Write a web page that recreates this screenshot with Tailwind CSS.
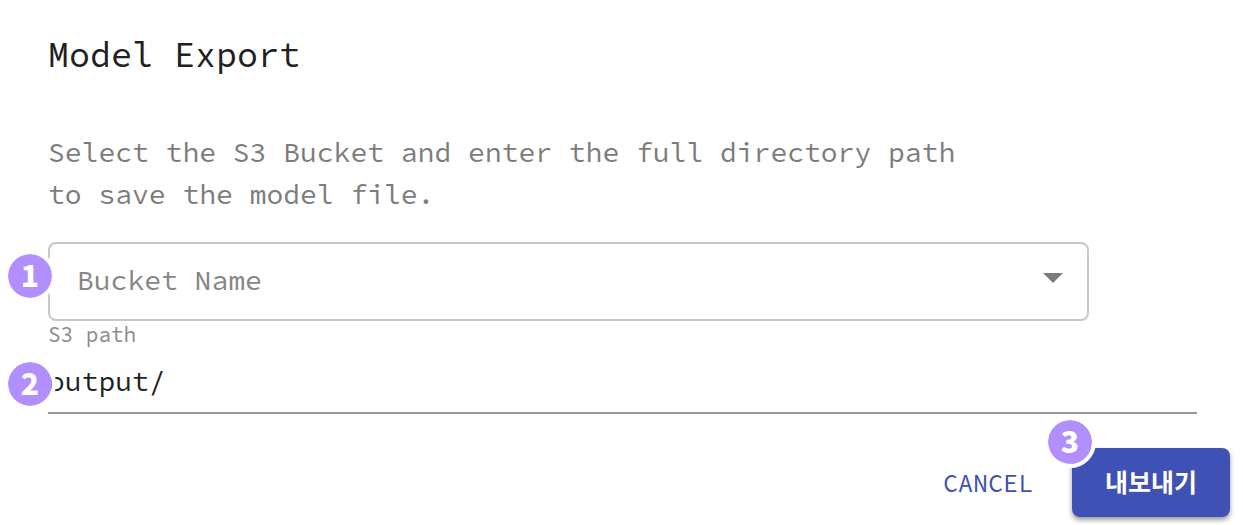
<!DOCTYPE html>
<html lang="ko">
<head>
<meta charset="utf-8">
<meta name="viewport" content="width=device-width, initial-scale=1">
<title>Model Export</title>
<script src="https://cdn.jsdelivr.net/npm/@tailwindcss/browser@4"></script>
</head>
<body class="min-h-screen bg-white font-['Source_Code_Pro','Noto_Sans_Mono','Liberation_Mono','Noto_Sans_CJK_KR',monospace]">
<main role="dialog" aria-labelledby="title" aria-describedby="description" class="w-full pt-[31px]">
  <div class="pl-12 pr-[46px]">
    <h1 id="title" class="text-[35px] leading-[48px] text-[#212121]">Model Export</h1>
    <p id="description" class="mt-[52px] text-[28px] leading-[42px] text-[#7c7c7c]">Select the S3 Bucket and enter the full directory path<br>to save the model file.</p>
    <div class="relative mt-[27px] mr-[108px]">
      <select aria-label="Bucket Name" class="block h-[79px] w-full appearance-none rounded-lg border-2 border-[#c8c8c8] bg-white pb-1 pl-[27px] pr-16 text-[28px] leading-[42px] text-[#868686]">
        <option>Bucket Name</option>
      </select>
      <svg class="pointer-events-none absolute right-[26px] top-[31px] h-[10px] w-5" viewBox="0 0 20 10" aria-hidden="true"><path d="M0 0h20L10 10z" fill="#7c7c7c"/></svg>
      <span class="absolute -left-11 top-[8px] flex size-[52px] items-center justify-center rounded-full border-4 border-white bg-[#b18fff] bg-clip-padding pb-1 font-['Noto_Sans_CJK_KR',sans-serif] text-[30px] leading-none font-black text-white">1</span>
    </div>
    <label for="path" class="block text-[21px] leading-[28px] text-[#8a8a8a]">S3 path</label>
    <div class="relative">
      <input id="path" type="text" value="output/" class="block h-[65px] w-full border-b-2 border-[#979797] bg-transparent text-[28px] leading-[42px] text-[#212121] outline-none">
      <span class="absolute -left-11 top-[9px] flex size-[52px] items-center justify-center rounded-full border-4 border-white bg-[#b18fff] bg-clip-padding pb-1 font-['Noto_Sans_CJK_KR',sans-serif] text-[30px] leading-none font-black text-white">2</span>
    </div>
  </div>
  <div class="mt-[34px] flex items-center justify-end gap-[39px] pr-[13px]">
    <button type="button" class="text-[25px] leading-[42px] text-[#3f51b5]">CANCEL</button>
    <div class="relative">
      <button type="button" class="block h-[69px] w-[158px] rounded-lg bg-[#3f51b5] pb-0.5 font-['Noto_Sans_CJK_KR',sans-serif] text-[25px] leading-none font-bold text-white shadow-[0_3px_5px_rgba(0,0,0,0.4)]">내보내기</button>
      <span class="absolute -left-7 -top-8 flex size-[52px] items-center justify-center rounded-full border-4 border-white bg-[#b18fff] bg-clip-padding pb-1 font-['Noto_Sans_CJK_KR',sans-serif] text-[30px] leading-none font-black text-white">3</span>
    </div>
  </div>
</main>
</body>
</html>
